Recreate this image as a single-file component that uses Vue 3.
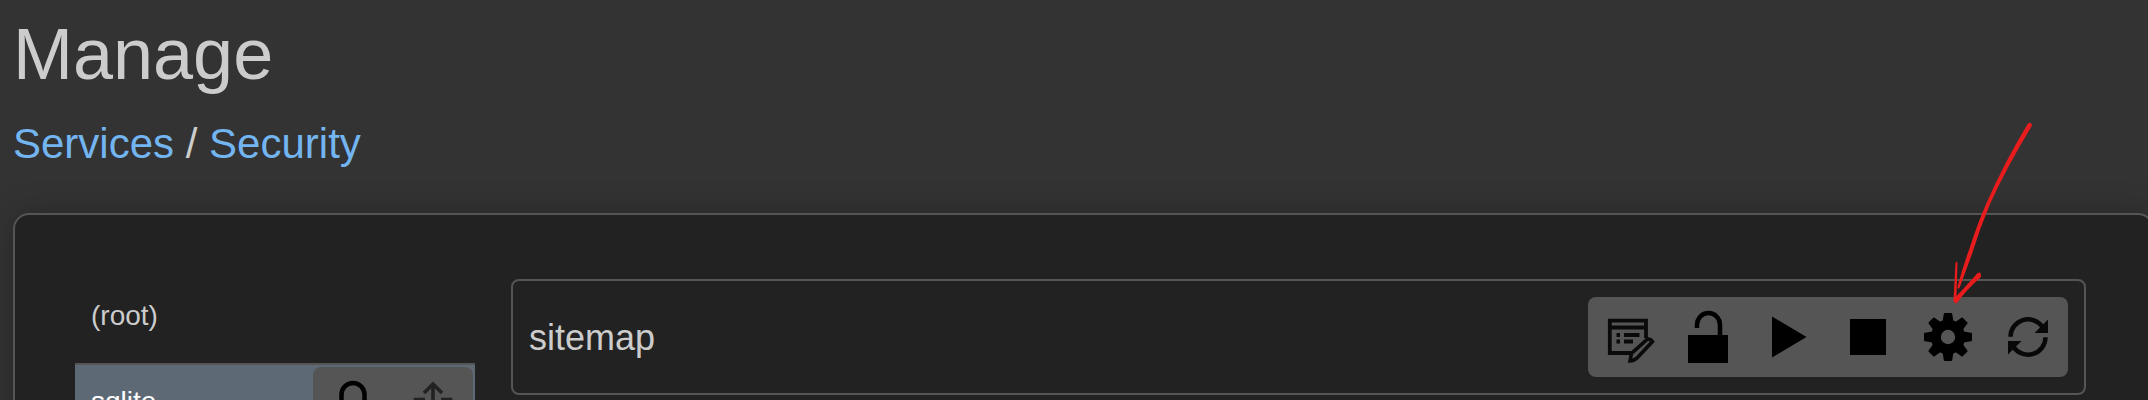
<script setup>
const actions = ['edit', 'unlock', 'play', 'stop', 'gear', 'refresh']
const teeth = [0, 45, 90, 135, 180, 225, 270, 315]
</script>

<template>
  <div class="page">
    <h1>Manage</h1>
    <nav class="crumbs"><a>Services</a> / <a>Security</a></nav>

    <main class="panel">
      <aside class="list">
        <div class="item">(root)</div>
        <div class="item selected">
          <span>sqlite</span>
          <div class="tools">
            <svg class="icon" viewBox="0 0 80 80">
              <path d="M28.500 44V27.500a11.500 11.500 0 0 1 23 0V44" fill="none" stroke="#000" stroke-width="4.500" />
              <rect x="20" y="38" width="40" height="28" />
            </svg>
            <svg class="icon" viewBox="0 0 80 80" fill="none" stroke="#222" stroke-width="3.600">
              <path d="M40 48V17M31 26l9-9 9 9M32 32.500H22.500V62h35V32.500H48" />
            </svg>
          </div>
        </div>
      </aside>

      <section class="card">
        <span class="name">sitemap</span>
        <div class="tools">
          <svg v-for="name in actions" :key="name" class="icon" viewBox="0 0 80 80">
            <g v-if="name === 'edit'" fill="none" stroke="#0a0a0a" stroke-width="3.800">
              <path d="M58 41V23.700H21.800V56H43M22 30.500H58" />
              <path d="M28.500 38h3.500M28.500 44.500h3.500M36 38h15.500M36 44.500h9" />
              <path d="M42 64L43.500 56.500 59 42.500Q62 41 64.500 44.500L49.500 60.500Q46 64 42 64z" stroke-width="3.600" />
            </g>
            <g v-else-if="name === 'unlock'">
              <path d="M29 31V28a11.500 12 0 0 1 23 0V40" fill="none" stroke="#000" stroke-width="4.500" />
              <rect x="20" y="38" width="40" height="28" />
            </g>
            <path v-else-if="name === 'play'" d="M24 19.500L58.500 40 24 60.500z" />
            <rect v-else-if="name === 'stop'" x="22" y="22" width="36" height="36" />
            <g v-else-if="name === 'gear'">
              <circle cx="40" cy="40" r="12.200" fill="none" stroke="#000" stroke-width="10" />
              <path v-for="angle in teeth" :key="angle" :transform="`rotate(${angle} 40 40)`" d="M34.500 25l1.300-8.200q.2-.8 1-.8h6.400q.8 0 1 .8l1.300 8.200z" />
            </g>
            <g v-else>
              <path d="M22.500 39.800A17.500 17.500 0 0 1 54.500 30M57.500 40.200A17.500 17.500 0 0 1 25.500 50" fill="none" stroke="#080808" stroke-width="4.500" />
              <path d="M60 22.500V36H46.500zM20 57.500V44H33.500z" fill="#080808" />
            </g>
          </svg>
        </div>
      </section>
    </main>

    <svg class="arrow" viewBox="0 0 228 210">
      <path d="M107.500 24.200Q109 22 111 23.200 112.700 24.500 111.500 26.500 88 65 70 104 60 128 52 154L39.500 188Q38.500 189.500 37.300 187.500 42 169 50 147 58 122 67 102 84 63 107.500 24.200z" />
      <path d="M35.500 162.500Q36.700 161 37.500 163L36.500 196 45 187 55.500 175.500Q57 172 60 172.500 62.500 176 59.500 178.500 47 189 37 203 34 204 33.500 200z" />
    </svg>
  </div>
</template>

<style>
html, body { overflow: hidden; background: #333; }
</style>

<style scoped>
.page {
  position: relative;
  box-sizing: border-box;
  width: 2148px;
  height: 400px;
  padding-left: 13px;
  overflow: hidden;
  background: #333;
  color: #ccc;
  font-family: "Liberation Sans", Arial, sans-serif;
}
h1 {
  margin: 0;
  padding-top: 13px;
  font-size: 72px;
  line-height: 82px;
  font-weight: 400;
}
.crumbs {
  padding-top: 25px;
  font-size: 42px;
  line-height: 48px;
}
.crumbs a { color: #73b5f1; }
.panel {
  display: flex;
  align-items: flex-start;
  gap: 36px;
  box-sizing: border-box;
  width: 2141px;
  height: 500px;
  margin-top: 45px;
  padding: 64px 60px;
  border: 2px solid #555;
  border-radius: 16px;
  background: #222;
  box-shadow: 0 0 32px rgba(0, 0, 0, 0.22);
}
.list {
  flex: none;
  width: 400px;
  font-size: 28px;
}
.item {
  box-sizing: border-box;
  height: 84px;
  padding: 21px 16px;
  line-height: 32px;
}
.selected {
  display: flex;
  justify-content: space-between;
  height: 86px;
  padding: 2px 2px 2px 16px;
  border-top: 2px solid #555;
  background: #5d6975;
  color: #fff;
}
.selected > span { padding-top: 19px; }
.card {
  display: flex;
  flex: none;
  align-items: center;
  justify-content: space-between;
  box-sizing: border-box;
  width: 1575px;
  height: 116px;
  padding: 16px;
  border: 2px solid #555;
  border-radius: 8px;
  font-size: 36px;
}
.name { padding-top: 2px; }
.tools {
  display: flex;
  height: 80px;
  border-radius: 8px;
  background: #555;
}
.icon {
  display: block;
  width: 80px;
  height: 80px;
}
.arrow {
  position: absolute;
  top: 100px;
  left: 1920px;
  width: 228px;
  height: 210px;
  fill: #e81c1c;
}
</style>
